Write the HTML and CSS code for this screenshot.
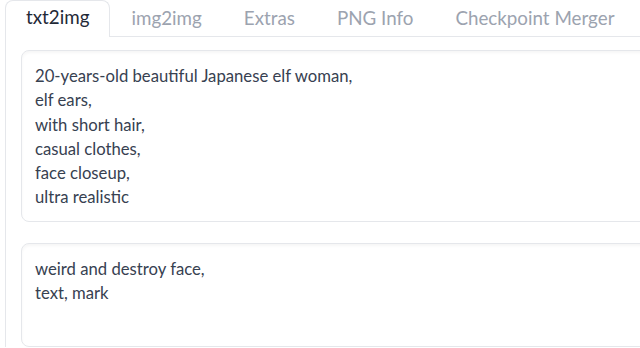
FILE: index.html
```html
<!DOCTYPE html>
<html lang="en">
<head>
    <meta charset="UTF-8">
    <meta name="viewport" content="width=device-width, initial-scale=1.0">
    <title>Stable Diffusion - txt2img</title>
    <link rel="stylesheet" href="styles.css">
</head>
<body>
    <div class="app">
        <div class="tabs">
            <button class="tab active">txt2img</button>
            <button class="tab">img2img</button>
            <button class="tab">Extras</button>
            <button class="tab">PNG Info</button>
            <button class="tab">Checkpoint Merger</button>
        </div>

        <div class="tab-panel">
            <textarea class="prompt prompt-main" readonly>20-years-old beautiful Japanese elf woman,
elf ears,
with short hair,
casual clothes,
face closeup,
ultra realistic</textarea>

            <textarea class="prompt prompt-negative" readonly>weird and destroy face,
text, mark</textarea>
        </div>
    </div>
</body>
</html>
```

FILE: styles.css
```css
* {
    margin: 0;
    padding: 0;
    box-sizing: border-box;
}

body {
    font-family: Lato, 'Noto Sans', sans-serif;
    background: white;
    overflow: hidden;
}

.app {
    width: 100%;
    padding-left: 5px;
    overflow: hidden;
}

.tabs {
    display: flex;
    border-bottom: 1px solid #e5e7eb;
    margin-right: -20px;
}

.tab {
    font-family: inherit;
    font-size: 18.8px;
    line-height: 26px;
    padding: 3px 20px 6px 20px;
    color: #9ca3af;
    background: none;
    border: 1px solid transparent;
    border-bottom: none;
    border-radius: 8px 8px 0 0;
    margin-bottom: -1px;
    white-space: nowrap;
    cursor: pointer;
}

.tab.active {
    color: #1f2937;
    background: white;
    border-color: #e5e7eb;
    padding-bottom: 7px;
}

.tab-panel {
    border-left: 1px solid #e5e7eb;
    padding: 13px 0 0 15px;
    margin-right: -20px;
    display: flex;
    flex-direction: column;
    gap: 21px;
}

.prompt {
    display: block;
    width: 100%;
    font-family: inherit;
    font-size: 16.7px;
    line-height: 24.3px;
    color: #374151;
    padding: 13px 13px;
    border: 1px solid #e5e7eb;
    border-radius: 8px;
    background: white;
    box-shadow: inset 0 2px 3px rgba(0,0,0,0.04);
    resize: none;
    overflow: hidden;
    outline: none;
}

.prompt-main {
    height: 172px;
}

.prompt-negative {
    height: 104px;
}
```
